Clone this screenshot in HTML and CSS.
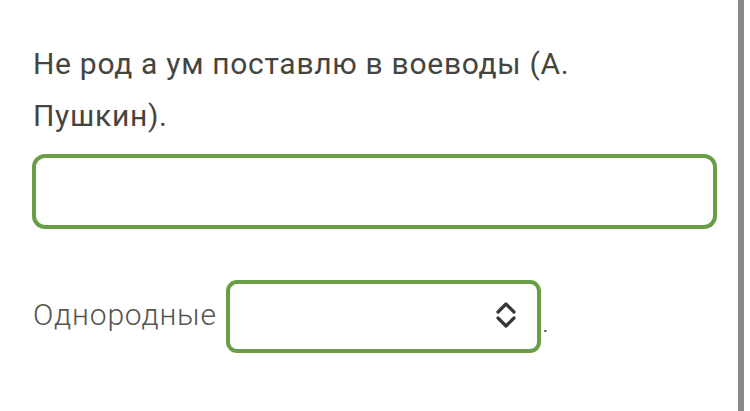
FILE: index.html
```html
<!DOCTYPE html>
<html lang="ru">
<head>
<meta charset="utf-8">
<link rel="stylesheet" href="styles.css">
</head>
<body>
<main class="page">
  <p class="question">Не род а ум поставлю в воеводы (А. Пушкин).</p>
  <div class="answer-box"></div>
  <div class="select-row">
    <span class="label">Однородные</span>
    <div class="select">
      <svg class="chev" width="20" height="28" viewBox="0 0 20 28" fill="none" stroke="#383838" stroke-width="3.2" stroke-linecap="round" stroke-linejoin="round">
        <path d="M2 11 L10 3 L18 11"/>
        <path d="M2 17 L10 25 L18 17"/>
      </svg>
    </div>
    <span class="dot">.</span>
  </div>
</main>
<div class="scrollbar"></div>
</body>
</html>
```
FILE: styles.css
```css
html, body {
  margin: 0;
  padding: 0;
  background: #ffffff;
}
body {
  width: 750px;
  height: 411px;
  overflow: hidden;
  position: relative;
  font-family: Roboto, "Noto Sans", sans-serif;
}
.page {
  padding: 38px 33px 0 32px;
}
.question {
  margin: 0 0 12px 1px;
  font-size: 30px;
  line-height: 52px;
  letter-spacing: 0.7px;
  color: #45453f;
  width: 600px;
}
.answer-box {
  height: 67px;
  border: 4px solid #6a9e46;
  border-radius: 13px;
}
.select-row {
  display: flex;
  align-items: center;
  margin-top: 51px;
}
.label {
  font-size: 30px;
  font-weight: 300;
  letter-spacing: 0.8px;
  color: #555550;
  margin-left: 1px;
  margin-right: 9px;
  position: relative;
  top: -2px;
}
.select {
  width: 286px;
  height: 65px;
  border: 4px solid #6a9e46;
  border-radius: 11px;
  display: flex;
  align-items: center;
  justify-content: flex-end;
  padding-right: 21px;
  box-sizing: content-box;
}
.chev {
  display: block;
  position: relative;
  top: -2px;
}
.dot {
  font-size: 20px;
  color: #555;
  margin-left: 2px;
  position: relative;
  top: 8px;
}
.scrollbar {
  position: absolute;
  left: 738px;
  top: 0;
  width: 6px;
  height: 411px;
  background: #8a8a8a;
}
```
